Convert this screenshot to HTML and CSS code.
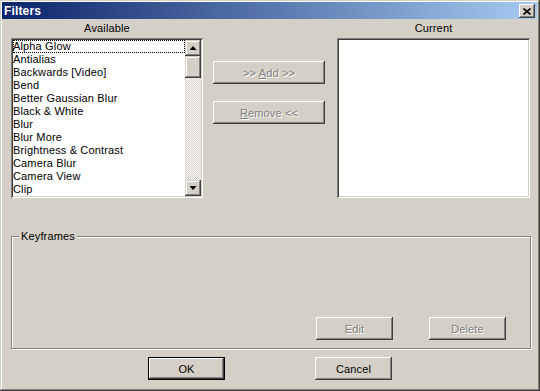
FILE: index.html
```html
<!DOCTYPE html>
<html lang="en">

<head>
  <meta charset="UTF-8">
  <title>Filters</title>
  <link rel="stylesheet" href="styles.css">
</head>

<body>
  <div class="window">
    <div class="titlebar">
      <span class="title">Filters</span>
      <div class="btn close">
        <svg width="8" height="7" viewBox="0 0 8 7">
          <path d="M0.5 0.5 L7.5 6.5 M7.5 0.5 L0.5 6.5" stroke="#000" stroke-width="1.6" fill="none" />
        </svg>
      </div>
    </div>

    <div class="lists">
      <div class="col col-available">
        <div class="caption">Available</div>
        <div class="listbox">
          <ul class="items">
            <li class="focused">Alpha Glow</li>
            <li>Antialias</li>
            <li>Backwards [Video]</li>
            <li>Bend</li>
            <li>Better Gaussian Blur</li>
            <li>Black &amp; White</li>
            <li>Blur</li>
            <li>Blur More</li>
            <li>Brightness &amp; Contrast</li>
            <li>Camera Blur</li>
            <li>Camera View</li>
            <li>Clip</li>
          </ul>
          <div class="scrollbar">
            <div class="sb-btn"><span class="arrow up"></span></div>
            <div class="sb-track">
              <div class="sb-thumb"></div>
            </div>
            <div class="sb-btn"><span class="arrow down"></span></div>
          </div>
        </div>
      </div>

      <div class="col col-actions">
        <div class="btn wide disabled"><span>&gt;&gt; <u>A</u>dd &gt;&gt;</span></div>
        <div class="btn wide disabled"><span><u>R</u>emove &lt;&lt;</span></div>
      </div>

      <div class="col col-current">
        <div class="caption">Current</div>
        <div class="listbox"></div>
      </div>
    </div>

    <div class="group">
      <span class="group-label">Keyframes</span>
      <div class="group-actions">
        <div class="btn disabled"><span>Edit</span></div>
        <div class="btn disabled"><span>Delete</span></div>
      </div>
    </div>

    <div class="footer">
      <div class="btn default"><span>OK</span></div>
      <div class="btn"><span>Cancel</span></div>
    </div>
  </div>
</body>

</html>
```

FILE: styles.css
```css
* {
  box-sizing: border-box;
}

body {
  width: 540px;
  height: 391px;
  margin: 0;
  padding: 0;
  overflow: hidden;
  font-family: "Liberation Sans", Tahoma, sans-serif;
  font-size: 11px;
  letter-spacing: 0.15px;
  color: #000;
}

.window {
  display: flex;
  flex-direction: column;
  width: 540px;
  height: 391px;
  padding: 2px 3px 0 2px;
  background: #d4d0c8;
  box-shadow: inset -1px -1px #404040, inset 1px 1px #d4d0c8, inset -2px -2px #808080, inset 2px 2px #fff;
}

/* title bar */
.titlebar {
  display: flex;
  align-items: center;
  justify-content: space-between;
  height: 17px;
  padding: 0 2px;
  background: linear-gradient(to right, #0a246a, #a6caf0);
}

.title {
  color: #fff;
  font-size: 12px;
  font-weight: bold;
}

/* buttons */
.btn {
  display: flex;
  align-items: center;
  justify-content: center;
  width: 77px;
  height: 23px;
  background: #d4d0c8;
  box-shadow: inset -1px -1px #404040, inset 1px 1px #fff, inset -2px -2px #808080, inset 2px 2px #d4d0c8;
  white-space: pre;
}

.btn.close {
  width: 16px;
  height: 14px;
  padding-top: 1px;
}

.btn.wide {
  width: 112px;
}

.btn.disabled {
  color: #808080;
  text-shadow: 1px 1px #fff;
}

.btn.default {
  border: 1px solid #000;
}

/* top lists */
.lists {
  display: flex;
  margin-top: 2px;
  padding-left: 9px;
}

.col-available {
  width: 192px;
}

.col-actions {
  display: flex;
  flex-direction: column;
  gap: 17px;
  width: 112px;
  margin-left: 10px;
  padding-top: 40px;
}

.col-current {
  width: 193px;
  margin-left: 12px;
}

.caption {
  height: 14px;
  line-height: 14px;
  margin-bottom: 3px;
  text-align: center;
}

.listbox {
  display: flex;
  height: 160px;
  padding: 2px;
  background: #fff;
  box-shadow: inset 1px 1px #808080, inset -1px -1px #fff, inset 2px 2px #404040, inset -2px -2px #d4d0c8;
}

.items {
  flex: 1;
  margin: 0;
  padding: 0;
  list-style: none;
}

.items li {
  height: 13px;
  line-height: 13px;
  white-space: nowrap;
}

.items li.focused {
  outline: 1px dotted #000;
  outline-offset: -1px;
}

/* scrollbar */
.scrollbar {
  display: flex;
  flex-direction: column;
  width: 16px;
}

.sb-btn,
.sb-thumb {
  display: flex;
  align-items: center;
  justify-content: center;
  height: 16px;
  background: #d4d0c8;
  box-shadow: inset -1px -1px #404040, inset 1px 1px #d4d0c8, inset -2px -2px #808080, inset 2px 2px #fff;
}

.sb-thumb {
  height: 22px;
}

.sb-track {
  flex: 1;
  background: repeating-conic-gradient(#d4d0c8 0 25%, #fff 0 50%) 0 0 / 2px 2px;
}

.arrow {
  width: 7px;
  height: 4px;
  background: #000;
}

.arrow.up {
  clip-path: polygon(50% 0, 100% 100%, 0 100%);
}

.arrow.down {
  clip-path: polygon(0 0, 100% 0, 50% 100%);
}

/* keyframes group */
.group {
  position: relative;
  width: 520px;
  height: 113px;
  margin-top: 38px;
  margin-left: 9px;
  border: 1px solid #808080;
  box-shadow: inset 1px 1px #fff, 1px 1px #fff;
}

.group-label {
  position: absolute;
  top: -8px;
  left: 7px;
  padding: 0 2px;
  line-height: 14px;
  background: #d4d0c8;
}

.group-actions {
  display: flex;
  justify-content: flex-end;
  gap: 36px;
  margin-top: 80px;
  padding-right: 24px;
}

/* dialog buttons */
.footer {
  display: flex;
  gap: 90px;
  margin-top: 8px;
  padding-left: 146px;
}
```
